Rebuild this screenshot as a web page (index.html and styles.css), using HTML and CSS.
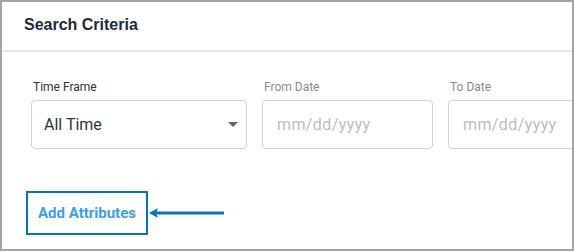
FILE: index.html
```html
<!DOCTYPE html>
<html lang="en">
<head>
    <meta charset="UTF-8">
    <meta name="viewport" content="width=device-width, initial-scale=1.0">
    <title>Search Criteria</title>
    <link rel="stylesheet" href="styles.css">
</head>
<body>

<div class="painel">
    <div class="painel-topo">
        <h2 class="titulo">Search Criteria</h2>
    </div>

    <div class="painel-corpo">
        <div class="campos">
            <div class="campo campo-largo">
                <label class="rotulo">Time Frame</label>
                <div class="caixa">
                    <span class="valor">All Time</span>
                    <span class="seta"></span>
                </div>
            </div>
            <div class="campo desabilitado">
                <label class="rotulo">From Date</label>
                <div class="caixa">
                    <span class="placeholder">mm/dd/yyyy</span>
                </div>
            </div>
            <div class="campo desabilitado">
                <label class="rotulo">To Date</label>
                <div class="caixa">
                    <span class="placeholder">mm/dd/yyyy</span>
                </div>
            </div>
        </div>

        <div class="acoes">
            <a class="botao-atributos">Add Attributes</a>
            <svg class="flecha" width="76" height="12" viewBox="0 0 76 12">
                <line x1="6" y1="6" x2="75" y2="6" stroke="#0872bf" stroke-width="3"/>
                <polygon points="0,6 9,1 7,6 9,11" fill="#0872bf"/>
            </svg>
        </div>
    </div>
</div>

</body>
</html>
```

FILE: styles.css
```css
* {
    box-sizing: border-box;
}

body {
    margin: 0;
    font-family: Roboto, "Liberation Sans", sans-serif;
}

.painel {
    width: 574px;
    height: 251px;
    border: 2px solid #a4a4a4;
    background-color: #fff;
    overflow: hidden;
}

.painel-topo {
    height: 50px;
    border-bottom: 2px solid #e6e6e6;
    padding: 13px 22px;
}

.titulo {
    margin: 0;
    font-family: "Liberation Sans", Arial, sans-serif;
    font-size: 16px;
    font-weight: 700;
    color: #1d2a3a;
    line-height: 19px;
}

.painel-corpo {
    padding: 27px 0 0 29px;
}

.campos {
    display: flex;
    gap: 15px;
}

.campo {
    width: 171px;
    flex-shrink: 0;
}

.campo-largo {
    width: 216px;
}

.rotulo {
    display: block;
    font-size: 12px;
    color: #333;
    line-height: 16px;
    padding-left: 2px;
    margin-bottom: 5px;
}

.desabilitado .rotulo {
    color: #8a8a8a;
}

.caixa {
    height: 49px;
    border: 1px solid #d2d2d2;
    border-radius: 4px;
    display: flex;
    align-items: center;
    justify-content: space-between;
    padding: 0 7px 0 12px;
}

.valor {
    font-size: 16px;
    color: #333;
}

.placeholder {
    font-size: 16px;
    color: #bdbdbd;
    letter-spacing: 0.4px;
    padding-left: 2px;
}

.seta {
    width: 0;
    height: 0;
    border-left: 5px solid transparent;
    border-right: 5px solid transparent;
    border-top: 5px solid #666;
    margin-right: 1px;
}

.acoes {
    display: flex;
    align-items: center;
    margin-top: 42px;
    margin-left: -5px;
}

.botao-atributos {
    display: block;
    border: 2px solid #0872bf;
    padding: 12px 10px 11px;
    font-size: 15px;
    font-weight: 700;
    color: #3d9fe3;
    line-height: 17px;
}

.flecha {
    display: block;
    margin-left: 1px;
}
```
